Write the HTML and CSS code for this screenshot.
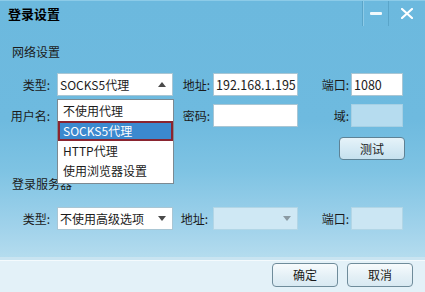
FILE: index.html
```html
<!DOCTYPE html>
<html lang="zh-CN">
<head>
<meta charset="utf-8">
<title>登录设置</title>
<link rel="stylesheet" href="styles.css">
</head>
<body>
<div class="window">
  <div class="titlebar">
    <div class="title">登录设置</div>
    <div class="controls">
      <div class="ctl min"><span class="dash"></span></div>
      <div class="ctl close">
        <svg width="12" height="11" viewBox="0 0 12 11"><path d="M1 1 L11 10 M11 1 L1 10" stroke="#ffffff" stroke-width="2.2" stroke-linecap="round"/></svg>
      </div>
    </div>
  </div>

  <div class="section-title first">网络设置</div>
  <div class="grid">
    <div class="label l1">类型:</div>
    <div class="select open">
      <span>SOCKS5代理</span>
      <span class="arrow up"></span>
    </div>
    <div class="label l2">地址:</div>
    <div class="input">192.168.1.195</div>
    <div class="label l3">端口:</div>
    <div class="input">1080</div>

    <div class="label l1 user">用户名:</div>
    <div class="cell-empty"></div>
    <div class="label l2">密码:</div>
    <div class="input"></div>
    <div class="label l3">域:</div>
    <div class="input disabled"></div>
  </div>

  <div class="test-row"><div class="btn test">测试</div></div>

  <div class="section-title second">登录服务器</div>
  <div class="grid single">
    <div class="label l1">类型:</div>
    <div class="select">
      <span>不使用高级选项</span>
      <span class="arrow down"></span>
    </div>
    <div class="label l2 alt">地址:</div>
    <div class="select disabled-combo"><span></span><span class="arrow down grey"></span></div>
    <div class="label l3 alt">端口:</div>
    <div class="input disabled2"></div>
  </div>

  <div class="footer">
    <div class="btn">确定</div>
    <div class="btn">取消</div>
  </div>

  <ul class="dropdown">
    <li>不使用代理</li>
    <li class="sel">SOCKS5代理</li>
    <li>HTTP代理</li>
    <li>使用浏览器设置</li>
  </ul>
</div>
</body>
</html>
```

FILE: styles.css
```css
* { box-sizing: border-box; }
html, body { margin: 0; padding: 0; }
body {
  width: 425px;
  height: 292px;
  overflow: hidden;
  font-family: "Noto Sans CJK SC", "Noto Sans", sans-serif;
  font-size: 12px;
  color: #1b1b1b;
}
.window {
  position: relative;
  width: 425px;
  height: 292px;
  display: flex;
  flex-direction: column;
  background: linear-gradient(to bottom, #6cb9de 0px, #6ebadf 120px, #7ec3e3 170px, #a2d3eb 230px, #b4dcee 257px);
}
.titlebar {
  height: 30px;
  display: flex;
  justify-content: space-between;
  border-top: 1px solid #8ccbe8;
}
.title {
  padding-left: 8px;
  padding-top: 3px;
  font-size: 13px;
  font-weight: bold;
  color: #000;
  line-height: 20px;
}
.controls { display: flex; height: 25px; }
.ctl {
  display: flex;
  align-items: center;
  justify-content: center;
}
.min {
  width: 27px;
  border-left: 1px solid #5aa5c9;
  border-right: 1px solid #5aa5c9;
  box-shadow: inset 1px 0 0 #8dcbe7;
  margin-left: 0;
}
.dash { width: 12px; height: 3px; background: #f2f9fc; border-radius: 1px; margin-top: 0px; }
.close { width: 36px; padding-top: 0; }
.section-title {
  padding-left: 12px;
  line-height: 16px;
  height: 16px;
}
.section-title.first { margin-top: 14px; }
.section-title.second { margin-top: 16px; }
.grid {
  display: grid;
  grid-template-columns: 57px 116px 40px 85px 53px 52px;
  grid-auto-rows: 23px;
  row-gap: 8px;
  margin-top: 13px;
}
.grid.single { margin-top: 15px; }
.label {
  display: flex;
  align-items: center;
  justify-content: flex-end;
  white-space: nowrap;
}
.l1 { padding-right: 7px; }
.l2 { padding-right: 3px; }
.l3 { padding-right: 2px; }
.l2.alt { padding-right: 5px; }
.l3.alt { padding-right: 2px; }
.user { padding-right: 7px; }
.select {
  background: #fff;
  border: 1px solid #a9c6d4;
  display: flex;
  align-items: center;
  justify-content: space-between;
  padding: 0 6px 0 2px;
  white-space: nowrap;
}
.input {
  background: #fff;
  border: 1px solid #a9c6d4;
  display: flex;
  align-items: center;
  padding-left: 2px;
  font-size: 12.5px;
}
.input.disabled { background: #b6dcef; border-color: #a6d0e4; }
.input.disabled2 { background: #cbe6f3; border-color: #b2d6e6; }
.select.disabled-combo { background: #cfe8f4; border-color: #b2d6e6; }
.arrow { width: 0; height: 0; border-left: 4px solid transparent; border-right: 4px solid transparent; }
.arrow.up { border-bottom: 5px solid #4a4a4a; }
.arrow.down { border-top: 5px solid #4a4a4a; }
.arrow.grey { border-top-color: #8a9aa3; }
.test-row {
  margin-top: 10px;
  padding-left: 339px;
}
.btn {
  width: 66px;
  height: 24px;
  border: 1px solid #6f8c9b;
  border-radius: 4px;
  background: linear-gradient(to bottom, #f7fbfd 0%, #e4f0f6 55%, #d8e9f2 100%);
  display: flex;
  align-items: center;
  justify-content: center;
  color: #1a1a1a;
}
.btn.test {
  height: 23px;
  background: linear-gradient(to bottom, #e6f3f9 0%, #d2e8f3 60%, #c6e1ee 100%);
  border-color: #5e8295;
}
.footer {
  margin-top: auto;
  height: 35px;
  background: #e3f1f8;
  border-top: 3px solid #c9e4f1;
  box-shadow: inset 0 1px 0 #f4fafd;
  display: flex;
  justify-content: flex-end;
  align-items: center;
  gap: 9px;
  padding-right: 12px;
  padding-bottom: 3px;
}
.dropdown {
  position: absolute;
  left: 57px;
  top: 99px;
  width: 117px;
  height: 85px;
  margin: 0;
  padding: 1px 0;
  list-style: none;
  background: #fff;
  border: 1px solid #7c8a92;
}
.dropdown li {
  height: 20px;
  line-height: 20px;
  padding-left: 5px;
  white-space: nowrap;
}
.dropdown li.sel {
  background: #3b89cf;
  color: #fff;
  border: 2px solid #8a2430;
  line-height: 16px;
  padding-left: 3px;
}
```
